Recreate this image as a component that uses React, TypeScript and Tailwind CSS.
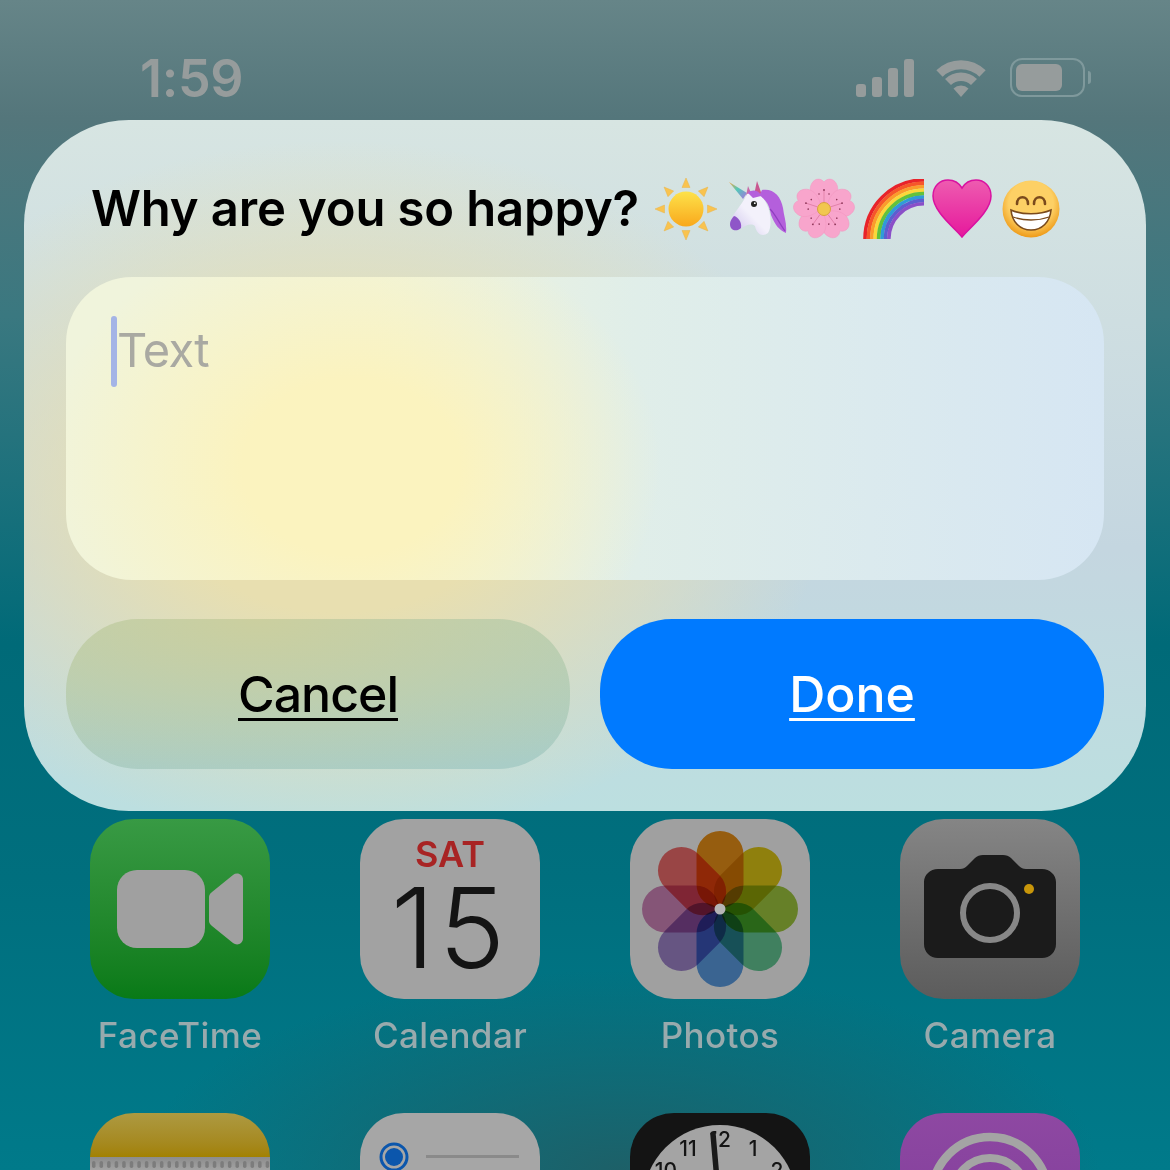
import type React from "react"

const sans = "font-['Inter','Liberation_Sans',sans-serif]"

function Wifi() {
  return (
    <svg width={50} height={38} viewBox="0 0 50 38" fill="none" stroke="#969c9c">
      <path d="M3.5 14.5A30.5 30.5 0 0 1 46.5 14.5" strokeWidth={9} />
      <path d="M12 23A18.5 18.5 0 0 1 38 23" strokeWidth={8.5} />
      <path d="M25 38L17.5 29.5A11 11 0 0 1 32.5 29.5Z" fill="#969c9c" stroke="none" />
    </svg>
  )
}

function Signal() {
  return (
    <div className="flex items-end gap-[6px]">
      <div className="h-[13px] w-[10px] rounded-[3px] bg-[#969c9c]" />
      <div className="h-[20px] w-[10px] rounded-[3px] bg-[#969c9c]" />
      <div className="h-[29px] w-[10px] rounded-[3px] bg-[#969c9c]" />
      <div className="h-[38px] w-[10px] rounded-[3px] bg-[#969c9c]" />
    </div>
  )
}

function Battery() {
  return (
    <div className="ml-[2px] flex items-center gap-[3px]">
      <div className="h-[39px] w-[75px] rounded-[12px] border-2 border-[#7f999c] p-[4px]">
        <div className="h-full w-[46px] rounded-[6px] bg-[#969c9c]" />
      </div>
      <div className="h-[13px] w-[3px] rounded-r-[3px] bg-[#7f999c]" />
    </div>
  )
}

function Sun() {
  return (
    <svg width={62} height={62} viewBox="0 0 62 62">
      <defs>
        <linearGradient id="sunFill" x1="0" y1="0" x2="0" y2="1">
          <stop offset="0" stopColor="#fde24a" />
          <stop offset="1" stopColor="#f9a81c" />
        </linearGradient>
      </defs>
      {[0, 45, 90, 135, 180, 225, 270, 315].map((a) => (
        <path key={a} d="M31 0L35 9.5H27Z" fill="#f9c34f" stroke="#e8b54a" strokeWidth={0.5} transform={`rotate(${a} 31 31)`} />
      ))}
      <circle cx={31} cy={31} r={17.5} fill="url(#sunFill)" />
    </svg>
  )
}

function Unicorn() {
  return (
    <svg width={58} height={56} viewBox="0 0 58 56">
      <defs>
        <linearGradient id="horn" x1="0" y1="0" x2="1" y2="1">
          <stop offset="0" stopColor="#f4a542" />
          <stop offset="0.45" stopColor="#52c8b8" />
          <stop offset="1" stopColor="#a872e0" />
        </linearGradient>
        <linearGradient id="uniFace" x1="1" y1="0" x2="0" y2="1">
          <stop offset="0.5" stopColor="#f3f1fb" />
          <stop offset="1" stopColor="#c9bdea" />
        </linearGradient>
      </defs>
      <path d="M0 1L18 12L14 18Z" fill="url(#horn)" />
      <path d="M19 5L23 14L17 15Z" fill="#c76aa8" />
      <path d="M28 0L33 14L25 14Z" fill="#c9578f" />
      <path d="M33 9C44 7 52 15 54 27C55 36 58 42 57 52C50 49 46 44 42 34C40 22 36 18 30 15Z" fill="#b45fdc" />
      <path d="M41 28C47 34 50 42 56 50" fill="none" stroke="#8f3fc0" strokeWidth={1.2} />
      <path d="M18 13C26 10 34 14 38 24C42 32 43 46 39 52C34 56 28 54 26 45C22 42 17 44 11 48C6 50 1 48 1 42C2 34 12 26 18 13Z" fill="url(#uniFace)" />
      <path d="M5 35C9 36 13 41 12 47C8 51 1 50 1 43C1 40 3 37 5 35Z" fill="#8f56c8" />
      <circle cx={25} cy={23} r={3} fill="#222" />
      <circle cx={25.8} cy={22.2} r={0.9} fill="#fff" />
      <path d="M19 12C23 8 30 9 32 15L24 17Z" fill="#b45fdc" />
    </svg>
  )
}

function Blossom() {
  return (
    <svg width={64} height={62} viewBox="-32 -31 64 62">
      {[0, 72, 144, 216, 288].map((a) => (
        <g key={a} transform={`rotate(${a})`}>
          <path d="M0 -3C-11 -8 -17 -18 -12 -26C-9 -31 -3 -31 0 -27C3 -31 9 -31 12 -26C17 -18 11 -8 0 -3Z" fill="#f8a5cc" stroke="#f296c0" strokeWidth={0.5} />
          <path d="M0 -7L0 -19" stroke="#d66e98" strokeWidth={0.6} />
          <circle cx={0} cy={-19} r={0.9} fill="#8d3758" />
          <circle cx={-5} cy={-15} r={0.8} fill="#8d3758" />
          <circle cx={5} cy={-15} r={0.8} fill="#8d3758" />
        </g>
      ))}
      <circle r={6.5} fill="#f1c74f" stroke="#d9a040" strokeWidth={1} />
    </svg>
  )
}

function Rainbow() {
  const bands = ["#e8232a", "#f6562a", "#fb9c2c", "#fbd83a", "#62c23c", "#2f9bd8", "#5b5fd0", "#8a4fc8"]
  return (
    <svg width={62} height={60} viewBox="0 0 62 60" fill="none">
      {bands.map((c, i) => {
        const r = 59 - i * 3.4
        return <path key={c} d={`M${62 - r} 60A${r} ${r} 0 0 1 62 ${60 - r}`} stroke={c} strokeWidth={3.6} />
      })}
    </svg>
  )
}

function Heart() {
  return (
    <svg width={60} height={60} viewBox="0 0 60 60">
      <defs>
        <linearGradient id="heartFill" x1="0" y1="0" x2="0" y2="1">
          <stop offset="0" stopColor="#ee5cb0" />
          <stop offset="1" stopColor="#e6189c" />
        </linearGradient>
      </defs>
      <path d="M30 58C24 50 1 33 1 17C1 7 8 1 16 1C22 1 27 4 30 9C33 4 38 1 44 1C52 1 59 7 59 17C59 33 36 50 30 58Z" fill="url(#heartFill)" stroke="#d911a0" strokeWidth={1.5} />
    </svg>
  )
}

function Grin() {
  return (
    <svg width={58} height={58} viewBox="0 0 58 58">
      <defs>
        <radialGradient id="grinFill" cx="0.5" cy="0.4" r="0.6">
          <stop offset="0.65" stopColor="#fdd065" />
          <stop offset="1" stopColor="#ee9a18" />
        </radialGradient>
      </defs>
      <circle cx={29} cy={29} r={28.5} fill="url(#grinFill)" />
      <path d="M15 24C15 15 26 15 26 24M32 24C32 15 43 15 43 24" fill="none" stroke="#7a4a1c" strokeWidth={2.6} strokeLinecap="round" />
      <path d="M9 30C20 35 38 35 49 30C48 42 40 50 29 50C18 50 10 42 9 30Z" fill="#fff" stroke="#7a4a1c" strokeWidth={1.6} />
      <path d="M11 37C22 41 36 41 47 37" fill="none" stroke="#7a4a1c" strokeWidth={1.3} />
    </svg>
  )
}

function Tile({ className, children }: { className: string; children?: React.ReactNode }) {
  return <div className={`h-[180px] w-[180px] overflow-hidden rounded-[44px] ${className}`}>{children}</div>
}

function FaceTime() {
  return (
    <Tile className="flex items-center justify-center gap-[4px] bg-gradient-to-b from-[#389a44] to-[#087a17]">
      <div className="h-[78px] w-[88px] rounded-[20px] bg-[#a0a0a0]" />
      <svg width={34} height={72} viewBox="0 0 34 72">
        <path d="M0 24C0 22 1 21 3 19L24 2C28 -1 34 1 34 7V65C34 71 28 73 24 70L3 53C1 51 0 50 0 48Z" fill="#a0a0a0" />
      </svg>
    </Tile>
  )
}

function Calendar() {
  return (
    <Tile className={`flex flex-col items-center bg-[#a2a2a2] ${sans}`}>
      <div className="mt-[15px] h-[40px] text-[36px] font-semibold leading-[40px] text-[#a82424]">SAT</div>
      <div className="text-[112px] font-light leading-[106px] tracking-[4px] text-[#141414]">15</div>
    </Tile>
  )
}

const petals = ["#f09418", "#e4cc14", "#a2cc40", "#66cc98", "#5ca0e8", "#a288d0", "#d488be", "#f46e6e"]

function Photos() {
  return (
    <Tile className="bg-[#a0a0a0]">
      <svg width={180} height={180} viewBox="-90 -90 180 180">
        {petals.map((c, i) => (
          <path
            key={c}
            d="M-23.5 -54.5A23.5 23.5 0 0 1 23.5 -54.5V-24.5A23.5 23.5 0 0 1 -23.5 -24.5Z"
            fill={c}
            className="mix-blend-multiply"
            transform={`rotate(${i * 45})`}
          />
        ))}
        <circle r={5.5} fill="#b5b5b5" />
      </svg>
    </Tile>
  )
}

function Camera() {
  return (
    <Tile className="bg-gradient-to-b from-[#858585] to-[#5c5c5c]">
      <svg width={180} height={180} viewBox="0 0 180 180">
        <path d="M38 50H60C63 50 65 49 67 47L75 39C77 37 80 36 83 36H103C106 36 109 37 111 39L119 47C121 49 123 50 126 50H142C150 50 156 56 156 63V125C156 133 150 139 142 139H38C30 139 24 133 24 125V63C24 56 30 50 38 50Z" fill="#1b1b1b" />
        <circle cx={90} cy={94} r={27} fill="none" stroke="#878787" strokeWidth={6} />
        <circle cx={129} cy={70} r={5} fill="#c8960a" />
      </svg>
    </Tile>
  )
}

function Notes() {
  return (
    <Tile className="flex flex-col">
      <div className="h-[44px] shrink-0 bg-gradient-to-b from-[#ad9a40] to-[#a28100]" />
      <div className="h-[136px] bg-[#a5a5a5] bg-gradient-to-b from-[#8c8c8c] to-[#a5a5a5] to-[14px]">
        <svg width={180} height={10} viewBox="0 0 180 10" className="mt-[3px]">
          {Array.from({ length: 24 }, (_, i) => (
            <rect key={i} x={2 + i * 7.55} y={1} width={3.5} height={7} rx={1.7} fill="#7c7c7c" />
          ))}
        </svg>
      </div>
    </Tile>
  )
}

function Reminders() {
  return (
    <Tile className="bg-[#a6a6a6]">
      <svg width={180} height={180} viewBox="0 0 180 180">
        <circle cx={34} cy={44} r={13} fill="none" stroke="#0b56ac" strokeWidth={3} />
        <circle cx={34} cy={44} r={9} fill="#0b56ac" />
        <rect x={66} y={42} width={93} height={3} fill="#8a8a8a" />
      </svg>
    </Tile>
  )
}

function Clock() {
  return (
    <Tile className="bg-[#141414]">
      <svg width={180} height={180} viewBox="0 0 180 180" fontFamily="Inter, Liberation Sans, sans-serif" fontWeight={500}>
        <circle cx={90} cy={89} r={77} fill="#a4a4a4" />
        <text x={58} y={43} fontSize={21} fill="#141414" textAnchor="middle">11</text>
        <text x={90} y={34} fontSize={21} fill="#141414" textAnchor="middle">12</text>
        <text x={123} y={43} fontSize={21} fill="#141414" textAnchor="middle">1</text>
        <text x={36} y={65} fontSize={21} fill="#141414" textAnchor="middle">10</text>
        <text x={147} y={65} fontSize={21} fill="#141414" textAnchor="middle">2</text>
        <path d="M83 21L89 90" stroke="#a4a4a4" strokeWidth={9} />
        <path d="M83 21L89 90" stroke="#1a1a1a" strokeWidth={5.5} strokeLinecap="round" />
      </svg>
    </Tile>
  )
}

function Podcasts() {
  return (
    <Tile className="bg-gradient-to-b from-[#8e48a2] to-[#7c3a98]">
      <svg width={180} height={180} viewBox="0 0 180 180" fill="none" stroke="#a4a4a4">
        <circle cx={90} cy={82} r={58} strokeWidth={8.5} />
        <circle cx={90} cy={82} r={37} strokeWidth={8} />
      </svg>
    </Tile>
  )
}

function AppIcon({ icon, label }: { icon: React.ReactNode; label?: string }) {
  return (
    <div className="flex h-[294px] flex-col items-center">
      {icon}
      {label && <div className="mt-[15px] whitespace-nowrap text-[35px] font-medium leading-[42px] tracking-[0.4px] text-[#98aaad]">{label}</div>}
    </div>
  )
}

export default function App() {
  return (
    <div className={`relative h-[1170px] w-[1170px] overflow-hidden bg-[radial-gradient(ellipse_480px_200px_at_620px_1170px,#1d6068,transparent),linear-gradient(180deg,#668588_0%,#54767b_10%,#3a7880_27%,#006a78_55%,#006f7e_75%,#007a8a_100%)] ${sans}`}>
      <div className="flex h-[120px] items-start justify-between pl-[140px] pr-[79px] pt-[49px]">
        <div className="text-[52px] font-semibold leading-[60px] tracking-[-0.3px] text-[#969c9c]">1:59</div>
        <div className="mt-[9px] flex items-center gap-[22px]">
          <Signal />
          <Wifi />
          <Battery />
        </div>
      </div>

      <div className="mx-[24px] flex h-[691px] flex-col rounded-[105px] bg-[radial-gradient(ellipse_490px_350px_at_315px_370px,#e8dfb0_35%,transparent),linear-gradient(180deg,#d7e5e2_0%,#c4d6e0_62%,#bcdfe0_100%)] px-[42px] pt-[56px]">
        <div className="ml-[25px] flex h-[66px] items-center">
          <span className="text-[49px] font-semibold leading-[60px] tracking-[-0.15px] text-black">Why are you so happy?</span>
          <div className="ml-[16px] flex items-center">
            <Sun />
            <div className="ml-[12px]"><Unicorn /></div>
            <div className="ml-[5px]"><Blossom /></div>
            <div className="ml-[6px]"><Rainbow /></div>
            <div className="ml-[8px]"><Heart /></div>
            <div className="ml-[10px]"><Grin /></div>
          </div>
        </div>

        <div className="mt-[35px] flex h-[303px] items-start rounded-[66px] bg-[radial-gradient(ellipse_310px_250px_at_285px_190px,#fbf3bf_35%,transparent),linear-gradient(90deg,#f0f4dc_0%,#f0f4dc_30%,#e0eee9_55%,#d6e6f3_100%)] pl-[45px] pt-[39px]">
          <div className="h-[71px] w-[6px] rounded-[3px] bg-[#a4b4e6]" />
          <span className="mt-[3px] text-[47px] leading-[62px] tracking-[-0.8px] text-[#a9a9a2]">Text</span>
        </div>

        <div className="mt-[39px] flex gap-[30px]">
          <button className="h-[150px] flex-1 rounded-[72px] bg-[radial-gradient(ellipse_480px_170px_at_190px_0px,#cbcf9f,transparent),linear-gradient(180deg,#b6cfb8,#a9cdc7)] text-[50px] font-medium tracking-[-1px] text-black underline decoration-[3px] underline-offset-[6px]">
            Cancel
          </button>
          <button className="h-[150px] flex-1 rounded-[72px] bg-[#007aff] text-[50px] font-medium text-white underline decoration-[3px] underline-offset-[6px]">
            Done
          </button>
        </div>
      </div>

      <div className="mt-[8px] grid grid-cols-[180px_180px_180px_180px] gap-x-[90px] px-[90px]">
        <AppIcon icon={<FaceTime />} label="FaceTime" />
        <AppIcon icon={<Calendar />} label="Calendar" />
        <AppIcon icon={<Photos />} label="Photos" />
        <AppIcon icon={<Camera />} label="Camera" />
        <AppIcon icon={<Notes />} />
        <AppIcon icon={<Reminders />} />
        <AppIcon icon={<Clock />} />
        <AppIcon icon={<Podcasts />} />
      </div>
    </div>
  )
}
